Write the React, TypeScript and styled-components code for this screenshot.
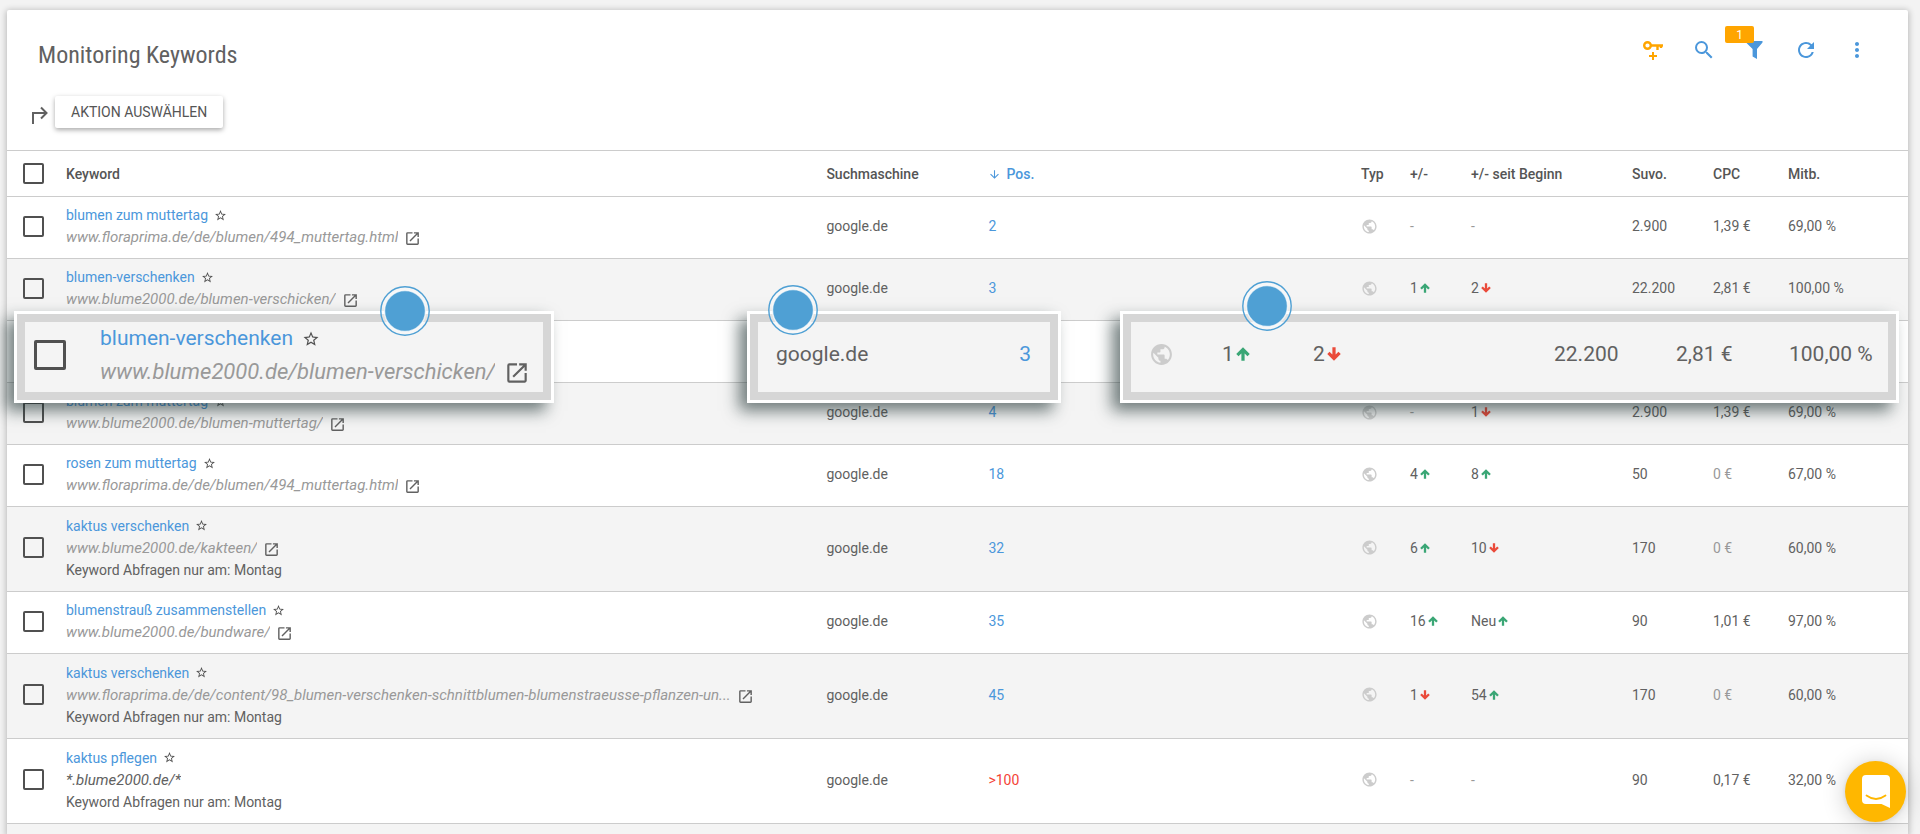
import React from "react";
import styled, { createGlobalStyle, css } from "styled-components";
import { MdOpenInNew, MdPublic, MdRefresh, MdSearch, MdStarBorder, MdMoreVert, MdArrowDownward } from "react-icons/md";

const blue = "#4b97db";
const ink = "#616161";
const muted = "#999999";
const stripe = "#f4f4f4";
const line = "#cccccc";

const GlobalStyle = createGlobalStyle`
  *, *::before, *::after { box-sizing: border-box; }
  body {
    margin: 0;
    background: #f3f3f3;
    color: ${ink};
    font-family: Roboto, "Liberation Sans", sans-serif;
    font-size: 14px;
  }
  button { font-family: inherit; }
`;

const Page = styled.main`
  position: relative;
  display: flex;
  min-height: 100vh;
  padding: 10px 12px 0 7px;
  overflow: hidden;
`;

const Card = styled.section`
  display: flex;
  flex: 1;
  flex-direction: column;
  background: #ffffff;
  border-radius: 2px 2px 0 0;
  box-shadow: 0 1px 6px 1px rgba(0, 0, 0, 0.24);
`;

const CardHeader = styled.header`
  display: flex;
  justify-content: space-between;
  padding: 28px 39px 0 31px;
`;

const Title = styled.h1`
  margin: 0;
  color: ${ink};
  font-family: "Roboto Condensed", Roboto, sans-serif;
  font-size: 24px;
  font-weight: 400;
  line-height: 34px;
`;

const Tools = styled.div`
  display: flex;
  gap: 27px;
  height: 24px;
`;

const ToolButton = styled.button<{ $color?: string }>`
  position: relative;
  width: 24px;
  height: 24px;
  padding: 0;
  border: 0;
  background: none;
  color: ${(p) => p.$color ?? blue};
  svg { display: block; }
`;

const Badge = styled.span`
  position: absolute;
  top: -12px;
  right: 13px;
  width: 29px;
  height: 17px;
  border-radius: 2px;
  background: #ffa500;
  color: #ffffff;
  font-size: 12px;
  line-height: 18px;
`;

const ActionBar = styled.div`
  display: flex;
  gap: 6px;
  padding: 24px 24px 22px;
  svg { margin-top: 8px; }
`;

const ActionButton = styled.button`
  height: 32px;
  padding: 0 16px;
  border: 0;
  border-radius: 2px;
  background: #ffffff;
  color: #555555;
  font-size: 14px;
  line-height: 32px;
  text-transform: uppercase;
  box-shadow: 0 2px 5px rgba(0, 0, 0, 0.34);
`;

const Table = styled.table`
  width: 100%;
  border-collapse: separate;
  border-spacing: 0;
  table-layout: fixed;
  border-top: 1px solid ${line};
`;

const Col = styled.col<{ $w?: string }>`
  width: ${(p) => p.$w ?? "auto"};
`;

const Th = styled.th<{ $active?: boolean }>`
  height: 46px;
  padding: 0;
  border-bottom: 1px solid ${line};
  color: ${(p) => (p.$active ? blue : "#555555")};
  font-weight: 500;
  text-align: left;
  white-space: nowrap;
  svg { margin-right: 5px; vertical-align: -2px; }
`;

const Row = styled.tr`
  &:nth-child(even) { background: ${stripe}; }
`;

const Td = styled.td<{ $tone?: string; $tall?: boolean }>`
  height: ${(p) => (p.$tall ? 85 : 62)}px;
  padding: 7px 0 10px;
  border-bottom: 1px solid ${line};
  color: ${(p) => p.$tone ?? ink};
  line-height: 22px;
  white-space: nowrap;
`;

const TypeIcon = styled(MdPublic)`
  display: block;
  color: ${line};
`;

const Tick = styled.input<{ $large?: boolean }>`
  appearance: none;
  display: block;
  flex: none;
  width: ${(p) => (p.$large ? 32 : 21)}px;
  height: ${(p) => (p.$large ? 30 : 21)}px;
  margin: 0;
  border: ${(p) => (p.$large ? 3 : 2)}px solid #505050;
  border-radius: 2px;
`;

const TickCell = styled.td`
  padding: 0 0 3px 16px;
  border-bottom: 1px solid ${line};
`;

const TickHead = styled(Th)`
  padding-left: 16px;
`;

const Line = styled.div<{ $large?: boolean }>`
  display: flex;
  align-items: center;
  gap: ${(p) => (p.$large ? 9 : 6)}px;
  height: ${(p) => (p.$large ? 33 : 22)}px;
  font-size: ${(p) => (p.$large ? 21 : 14)}px;
  line-height: ${(p) => (p.$large ? 33 : 22)}px;
`;

const KeywordLink = styled.a`
  color: ${blue};
  text-decoration: none;
`;

const Url = styled.span<{ $dark?: boolean; $large?: boolean }>`
  max-width: 680px;
  overflow: hidden;
  color: ${(p) => (p.$dark ? ink : muted)};
  font-size: ${(p) => (p.$large ? 22 : 15)}px;
  font-style: italic;
  text-overflow: ellipsis;
  white-space: nowrap;
`;

const StarButton = styled.button`
  padding: 0;
  border: 0;
  background: none;
  color: #505050;
  svg { display: block; }
`;

const OpenLink = styled.a`
  padding-top: 3px;
  color: ${ink};
  svg { display: block; }
`;

const Delta = styled.span`
  display: inline-flex;
  align-items: center;
  gap: 2px;
`;

const Rest = styled.div`
  flex: 1;
  min-height: 11px;
  background: ${stripe};
`;

const edge = css`
  border: 3px solid #ffffff;
  box-shadow: inset 0 0 0 8px #d6d6d6, -8px 8px 15px rgba(30, 50, 50, 0.62);
`;

const Callout = styled.aside<{ $left?: string; $right?: string; $width: string }>`
  ${edge}
  position: absolute;
  top: 311px;
  left: ${(p) => p.$left ?? "auto"};
  right: ${(p) => p.$right ?? "auto"};
  width: ${(p) => p.$width};
  height: 92px;
  background: ${stripe};
  font-size: 21px;
`;

const KeywordCallout = styled(Callout)`
  display: flex;
  align-items: center;
  gap: 34px;
  padding: 0 17px 4px;
`;

const EngineCallout = styled(Callout)`
  display: flex;
  align-items: center;
  justify-content: space-between;
  padding: 0 27px 6px 26px;
`;

const ValuesCallout = styled(Callout)`
  display: grid;
  grid-template-columns: 73px 91px 241px 122px 113px auto;
  align-items: center;
  padding: 0 11px 6px 26px;
`;

const Accent = styled.span`
  color: ${blue};
`;

const MarkerSvg = styled.svg<{ $left: string; $top: string }>`
  position: absolute;
  top: ${(p) => p.$top};
  left: ${(p) => p.$left};
`;

const ChatButton = styled.button`
  position: fixed;
  right: 14px;
  bottom: 12px;
  display: grid;
  place-items: center;
  width: 61px;
  height: 61px;
  padding: 0;
  border: 0;
  border-radius: 50%;
  background: #ffb700;
  box-shadow: 0 2px 24px rgba(0, 0, 0, 0.2), 0 1px 5px rgba(0, 0, 0, 0.1);
`;

type Change = { value: string; dir?: "up" | "down" };

type Entry = {
  keyword: string;
  url: string;
  pattern?: boolean;
  note?: boolean;
  pos: string;
  change: Change;
  total: Change;
  volume: string;
  cpc: string;
  competition: string;
};

const none: Change = { value: "-" };
const up = (value: string): Change => ({ value, dir: "up" });
const down = (value: string): Change => ({ value, dir: "down" });

const entries: (Entry | null)[] = [
  { keyword: "blumen zum muttertag", url: "www.floraprima.de/de/blumen/494_muttertag.html", pos: "2", change: none, total: none, volume: "2.900", cpc: "1,39 €", competition: "69,00 %" },
  { keyword: "blumen-verschenken", url: "www.blume2000.de/blumen-verschicken/", pos: "3", change: up("1"), total: down("2"), volume: "22.200", cpc: "2,81 €", competition: "100,00 %" },
  null,
  { keyword: "blumen zum muttertag", url: "www.blume2000.de/blumen-muttertag/", pos: "4", change: none, total: down("1"), volume: "2.900", cpc: "1,39 €", competition: "69,00 %" },
  { keyword: "rosen zum muttertag", url: "www.floraprima.de/de/blumen/494_muttertag.html", pos: "18", change: up("4"), total: up("8"), volume: "50", cpc: "0 €", competition: "67,00 %" },
  { keyword: "kaktus verschenken", url: "www.blume2000.de/kakteen/", note: true, pos: "32", change: up("6"), total: down("10"), volume: "170", cpc: "0 €", competition: "60,00 %" },
  { keyword: "blumenstrauß zusammenstellen", url: "www.blume2000.de/bundware/", pos: "35", change: up("16"), total: up("Neu"), volume: "90", cpc: "1,01 €", competition: "97,00 %" },
  { keyword: "kaktus verschenken", url: "www.floraprima.de/de/content/98_blumen-verschenken-schnittblumen-blumenstraeusse-pflanzen-un...", note: true, pos: "45", change: down("1"), total: up("54"), volume: "170", cpc: "0 €", competition: "60,00 %" },
  { keyword: "kaktus pflegen", url: "*.blume2000.de/*", pattern: true, note: true, pos: ">100", change: none, total: none, volume: "90", cpc: "0,17 €", competition: "32,00 %" },
];

function ChangeValue({ change, size = 10 }: { change: Change; size?: number }) {
  if (!change.dir) return <>{change.value}</>;
  const isUp = change.dir === "up";
  return (
    <Delta>
      {change.value}
      <svg width={size} height={size} viewBox="0 0 10 10" fill="none" stroke={isUp ? "#3aa675" : "#ea4a3a"} strokeWidth="2.3">
        <path d={isUp ? "M5 9.8V1.8M1 5.8L5 1.8L9 5.8" : "M5 0.2V8.2M1 4.2L5 8.2L9 4.2"} />
      </svg>
    </Delta>
  );
}

function KeywordLines({ keyword, url, pattern, large }: { keyword: string; url: string; pattern?: boolean; large?: boolean }) {
  return (
    <>
      <Line $large={large}>
        <KeywordLink href="#">{keyword}</KeywordLink>
        <StarButton type="button" aria-label="Favorit"><MdStarBorder size={large ? 18 : 13} /></StarButton>
      </Line>
      <Line $large={large}>
        <Url $dark={pattern} $large={large}>{url}</Url>
        {!pattern && (
          <OpenLink href="#" aria-label="Seite öffnen"><MdOpenInNew size={large ? 26 : 17} /></OpenLink>
        )}
      </Line>
    </>
  );
}

function Marker({ left, top }: { left: string; top: string }) {
  return (
    <MarkerSvg $left={left} $top={top} width="50" height="50" viewBox="0 0 50 50" aria-hidden="true">
      <circle cx="25" cy="25" r="24.2" fill="#ffffff" fillOpacity="0.3" stroke="#4fa0d4" strokeWidth="1.4" />
      <circle cx="25" cy="25" r="20.5" fill="#4fa0d4" stroke="#ffffff" strokeOpacity="0.7" strokeWidth="1.4" />
    </MarkerSvg>
  );
}

function EntryRow({ entry }: { entry: Entry }) {
  return (
    <Row>
      <TickCell><Tick type="checkbox" aria-label={entry.keyword} /></TickCell>
      <Td $tall={entry.note}>
        <KeywordLines keyword={entry.keyword} url={entry.url} pattern={entry.pattern} />
        {entry.note && <Line>Keyword Abfragen nur am: Montag</Line>}
      </Td>
      <Td>google.de</Td>
      <Td $tone={entry.pos === ">100" ? "#f44336" : blue}>{entry.pos}</Td>
      <Td><TypeIcon size={17} /></Td>
      <Td $tone={entry.change.dir ? ink : muted}><ChangeValue change={entry.change} /></Td>
      <Td $tone={entry.total.dir ? ink : muted}><ChangeValue change={entry.total} /></Td>
      <Td>{entry.volume}</Td>
      <Td $tone={entry.cpc === "0 €" ? muted : ink}>{entry.cpc}</Td>
      <Td>{entry.competition}</Td>
    </Row>
  );
}

export default function App() {
  return (
    <Page>
      <GlobalStyle />
      <Card>
        <CardHeader>
          <Title>Monitoring Keywords</Title>
          <Tools>
            <ToolButton type="button" aria-label="Keyword hinzufügen" $color="#ffa500">
              <svg width="24" height="24" viewBox="0 0 24 24" fill="none" stroke="currentColor" strokeWidth="2.4">
                <circle cx="6.5" cy="7.5" r="3.3" />
                <path d="M9.5 7.5H22M16.5 7.5V12M20 7.5V10" />
                <path d="M12 14V22M8 18H16" strokeWidth="2" />
              </svg>
            </ToolButton>
            <ToolButton type="button" aria-label="Suchen"><MdSearch size={24} /></ToolButton>
            <ToolButton type="button" aria-label="Filtern">
              <Badge>1</Badge>
              <svg width="24" height="24" viewBox="0 0 24 24" fill="currentColor">
                <path d="M3 3H19.5V4.5L14 11V21L9.6 18.6V11L3 4.5Z" />
              </svg>
            </ToolButton>
            <ToolButton type="button" aria-label="Aktualisieren"><MdRefresh size={24} /></ToolButton>
            <ToolButton type="button" aria-label="Mehr"><MdMoreVert size={24} /></ToolButton>
          </Tools>
        </CardHeader>
        <ActionBar>
          <svg width="18" height="22" viewBox="0 0 18 22" fill="none" stroke={ink} strokeWidth="2">
            <path d="M2 20V9H15M10 3.5L15.5 9L10 14.5" />
          </svg>
          <ActionButton type="button">Aktion auswählen</ActionButton>
        </ActionBar>
        <Table>
          <colgroup>
            <Col $w="59px" />
            <Col $w="40%" />
            <Col $w="162px" />
            <Col />
            <Col $w="49px" />
            <Col $w="61px" />
            <Col $w="161px" />
            <Col $w="81px" />
            <Col $w="75px" />
            <Col $w="120px" />
          </colgroup>
          <thead>
            <tr>
              <TickHead><Tick type="checkbox" aria-label="Alle auswählen" /></TickHead>
              <Th>Keyword</Th>
              <Th>Suchmaschine</Th>
              <Th $active><MdArrowDownward size={13} />Pos.</Th>
              <Th>Typ</Th>
              <Th>+/-</Th>
              <Th>+/- seit Beginn</Th>
              <Th>Suvo.</Th>
              <Th>CPC</Th>
              <Th>Mitb.</Th>
            </tr>
          </thead>
          <tbody>
            {entries.map((entry, i) =>
              entry ? <EntryRow key={i} entry={entry} /> : <Row key={i}><Td colSpan={10} /></Row>
            )}
          </tbody>
        </Table>
        <Rest />
      </Card>

      <KeywordCallout $left="14px" $width="540px">
        <Tick $large type="checkbox" aria-label="blumen-verschenken" />
        <div>
          <KeywordLines large keyword="blumen-verschenken" url="www.blume2000.de/blumen-verschicken/" />
        </div>
      </KeywordCallout>
      <EngineCallout $left="747px" $width="314px">
        <span>google.de</span>
        <Accent>3</Accent>
      </EngineCallout>
      <ValuesCallout $right="21px" $width="779px">
        <TypeIcon size={25} />
        <ChangeValue change={up("1")} size={14} />
        <ChangeValue change={down("2")} size={14} />
        <span>22.200</span>
        <span>2,81 €</span>
        <span>100,00 %</span>
      </ValuesCallout>
      <Marker left="380px" top="286px" />
      <Marker left="768px" top="285px" />
      <Marker left="1242px" top="281px" />

      <ChatButton type="button" aria-label="Chat öffnen">
        <svg width="28" height="33" viewBox="0 0 28 33">
          <path d="M4 0H24Q28 0 28 4V33L19.5 29H4Q0 29 0 25V4Q0 0 4 0Z" fill="#ffffff" />
          <path d="M4.5 20.5Q14 27.5 23.5 20.5" fill="none" stroke="#ffb700" strokeWidth="1.8" strokeLinecap="round" />
        </svg>
      </ChatButton>
    </Page>
  );
}
